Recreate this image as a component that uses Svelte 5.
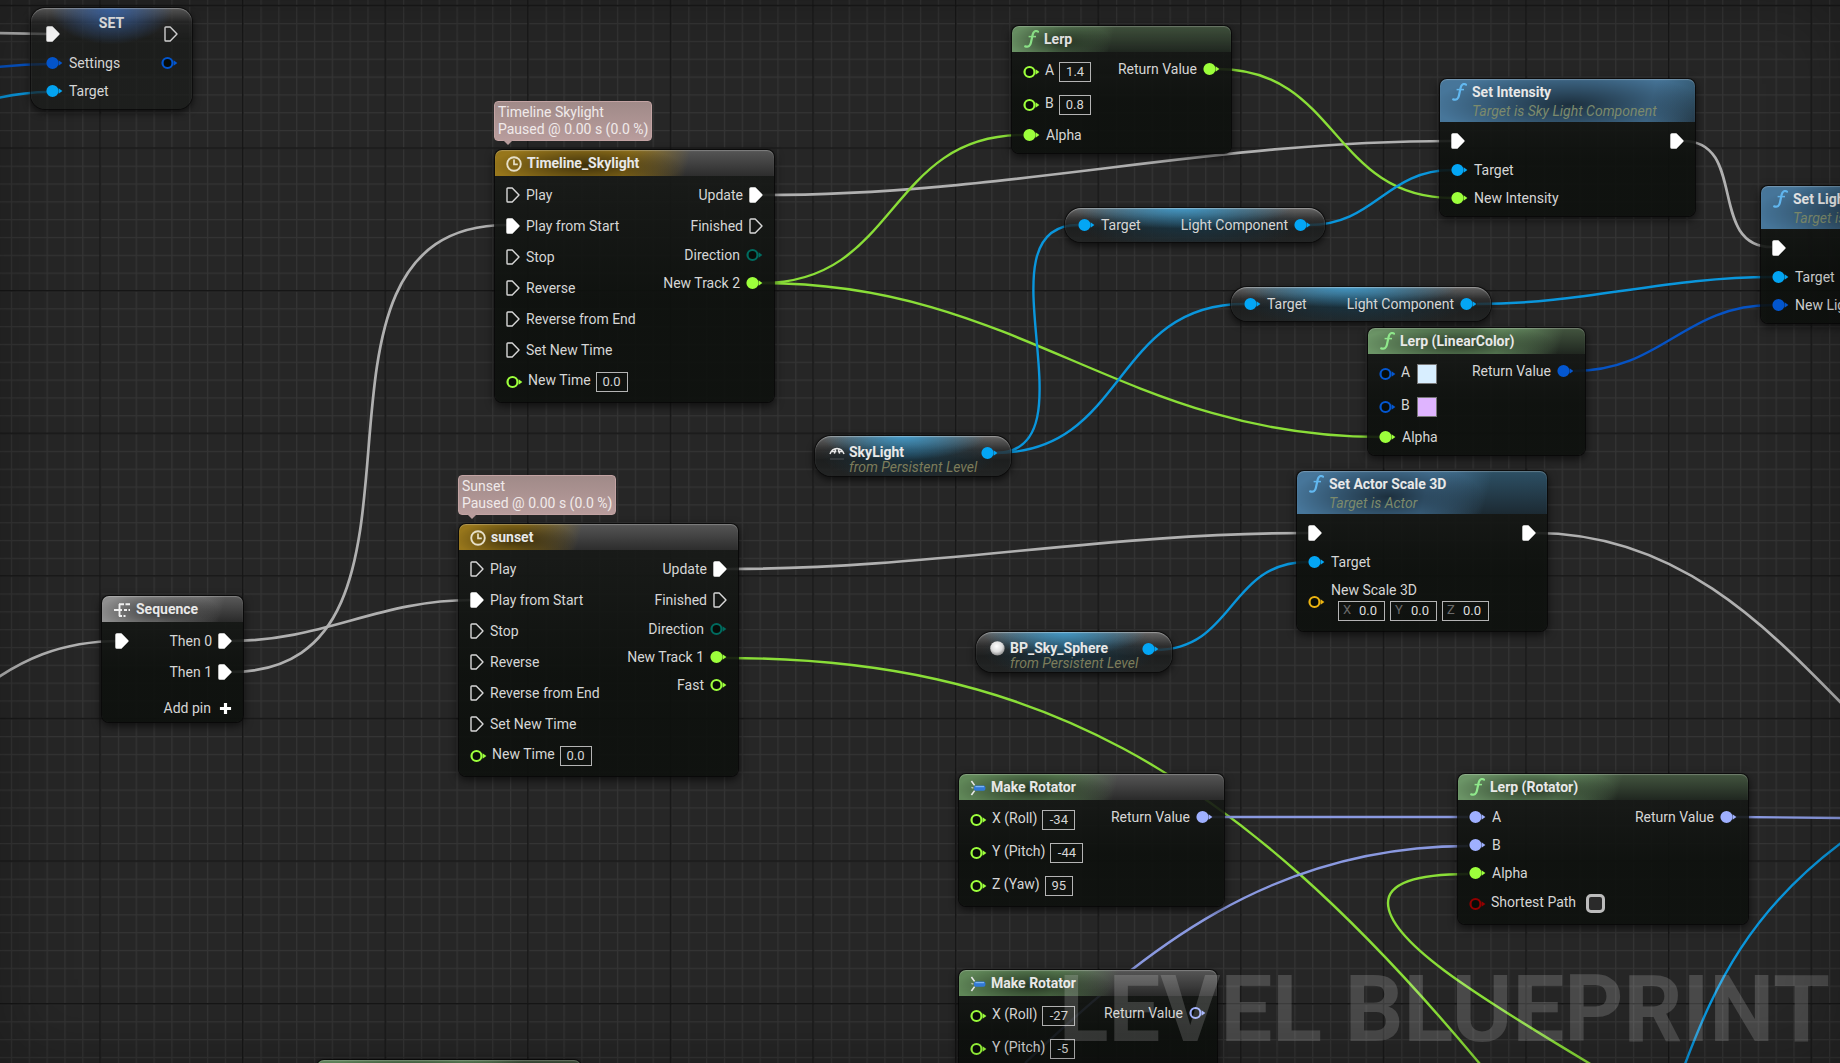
<script>
  const COLORS = {
    exec: '#ffffff',
    float: '#9dff3c',
    object: '#04a6f5',
    struct: '#0457d0',
    rotator: '#9fb0ff',
    vector: '#ecb411',
    bool: '#930000',
    enum: '#006b5f'
  };

  const playPins = [
    { label: 'Play', type: 'exec' },
    { label: 'Play from Start', type: 'exec', linked: true },
    { label: 'Stop', type: 'exec' },
    { label: 'Reverse', type: 'exec' },
    { label: 'Reverse from End', type: 'exec' },
    { label: 'Set New Time', type: 'exec' },
    { label: 'New Time', type: 'float', value: '0.0', size: 32 }
  ];

  const nodes = [
    {
      id: 'skylight-timeline', x: 495, y: 150, w: 279, kind: 'timeline', icon: 'clock', glow: 190,
      title: 'Timeline_Skylight',
      bubble: ['Timeline Skylight', 'Paused @ 0.00 s (0.0 %)'],
      inputs: playPins,
      outputs: [
        { label: 'Update', type: 'exec', linked: true },
        { label: 'Finished', type: 'exec' },
        { label: 'Direction', type: 'enum' },
        { label: 'New Track 2', type: 'float', linked: true }
      ]
    },
    {
      id: 'sunset-timeline', x: 459, y: 524, w: 279, kind: 'timeline', icon: 'clock', glow: 120,
      title: 'sunset',
      bubble: ['Sunset', 'Paused @ 0.00 s (0.0 %)'],
      inputs: playPins,
      outputs: [
        { label: 'Update', type: 'exec', linked: true },
        { label: 'Finished', type: 'exec' },
        { label: 'Direction', type: 'enum' },
        { label: 'New Track 1', type: 'float', linked: true },
        { label: 'Fast', type: 'float' }
      ]
    },
    {
      id: 'sequence', x: 102, y: 596, w: 141, kind: 'flow', icon: 'sequence', glow: 120,
      title: 'Sequence',
      inputs: [{ label: '', type: 'exec', linked: true }],
      outputs: [
        { label: 'Then 0', type: 'exec', linked: true },
        { label: 'Then 1', type: 'exec', linked: true }
      ],
      addPin: true
    },
    {
      id: 'lerp', x: 1012, y: 26, w: 219, kind: 'pure', icon: 'func', glow: 100,
      title: 'Lerp',
      inputs: [
        { label: 'A', type: 'float', value: '1.4', size: 32 },
        { label: 'B', type: 'float', value: '0.8', size: 32 },
        { label: 'Alpha', type: 'float', linked: true }
      ],
      outputs: [{ label: 'Return Value', type: 'float', linked: true }]
    },
    {
      id: 'lerp-color', x: 1368, y: 328, w: 217, kind: 'pure', icon: 'func', glow: 190,
      title: 'Lerp (LinearColor)',
      inputs: [
        { label: 'A', type: 'struct', color: '#d8eeff' },
        { label: 'B', type: 'struct', color: '#dfb4ff' },
        { label: 'Alpha', type: 'float', linked: true }
      ],
      outputs: [{ label: 'Return Value', type: 'struct', linked: true }]
    },
    {
      id: 'lerp-rotator', x: 1458, y: 774, w: 290, kind: 'pure', icon: 'func', glow: 160,
      title: 'Lerp (Rotator)',
      inputs: [
        { label: 'A', type: 'rotator', linked: true },
        { label: 'B', type: 'rotator', linked: true },
        { label: 'Alpha', type: 'float', linked: true },
        { label: 'Shortest Path', type: 'bool', check: true }
      ],
      outputs: [{ label: 'Return Value', type: 'rotator', linked: true }]
    },
    {
      id: 'rotator-1', x: 959, y: 774, w: 265, kind: 'make', icon: 'make', glow: 155,
      title: 'Make Rotator',
      inputs: [
        { label: 'X (Roll)', type: 'float', value: '-34', size: 33 },
        { label: 'Y (Pitch)', type: 'float', value: '-44', size: 33 },
        { label: 'Z (Yaw)', type: 'float', value: '95', size: 28 }
      ],
      outputs: [{ label: 'Return Value', type: 'rotator', linked: true }]
    },
    {
      id: 'rotator-2', x: 959, y: 970, w: 258, kind: 'make', icon: 'make', glow: 155,
      title: 'Make Rotator',
      inputs: [
        { label: 'X (Roll)', type: 'float', value: '-27', size: 33 },
        { label: 'Y (Pitch)', type: 'float', value: '-5', size: 25 }
      ],
      outputs: [{ label: 'Return Value', type: 'rotator' }]
    },
    {
      id: 'set-intensity', x: 1440, y: 79, w: 255, kind: 'call', icon: 'func', glow: 270,
      title: 'Set Intensity', sub: 'Target is Sky Light Component',
      inputs: [
        { label: '', type: 'exec', linked: true },
        { label: 'Target', type: 'object', linked: true },
        { label: 'New Intensity', type: 'float', linked: true }
      ],
      outputs: [{ label: '', type: 'exec', linked: true }]
    },
    {
      id: 'set-light', x: 1761, y: 186, w: 255, kind: 'call', icon: 'func', glow: 270,
      title: 'Set Light Color', sub: 'Target is Light Component',
      inputs: [
        { label: '', type: 'exec', linked: true },
        { label: 'Target', type: 'object', linked: true },
        { label: 'New Light Color', type: 'struct', linked: true }
      ],
      outputs: [{ label: '', type: 'exec', linked: true }]
    },
    {
      id: 'set-scale', x: 1297, y: 471, w: 250, kind: 'call', icon: 'func', glow: 190,
      title: 'Set Actor Scale 3D', sub: 'Target is Actor',
      inputs: [
        { label: '', type: 'exec', linked: true },
        { label: 'Target', type: 'object', linked: true },
        { label: 'New Scale 3D', type: 'vector', axes: ['X', 'Y', 'Z'] }
      ],
      outputs: [{ label: '', type: 'exec', linked: true }]
    }
  ];

  const casts = [
    { x: 1065, y: 208, w: 260 },
    { x: 1231, y: 287, w: 260 }
  ];

  const refs = [
    { x: 815, y: 436, w: 196, icon: 'dome', title: 'SkyLight' },
    { x: 976, y: 632, w: 196, icon: 'sphere', title: 'BP_Sky_Sphere' }
  ];

  // horizontal tangents grow with the distance between both pins
  function spline(x1, y1, x2, y2) {
    const c = (Math.abs(x2 - x1) + Math.abs(y2 - y1)) / 3;
    return `M${x1} ${y1}C${x1 + c} ${y1} ${x2 - c} ${y2} ${x2} ${y2}`;
  }

  const wires = [
    { type: 'exec', d: 'M-10 33L50 34' },
    { type: 'struct', d: 'M-10 68Q20 64 50 64' },
    { type: 'object', d: 'M-10 100Q20 92 50 92' },
    { type: 'exec', d: 'M-20 690C20 660 60 641 120 641' },
    { type: 'exec', d: spline(230, 641, 472, 600) },
    { type: 'exec', d: spline(230, 672, 507, 225) },
    { type: 'exec', d: spline(763, 195, 1452, 141) },
    { type: 'float', d: spline(762, 283, 1023, 135) },
    { type: 'float', d: spline(762, 283, 1381, 437) },
    { type: 'float', d: spline(1218, 69, 1452, 198) },
    { type: 'object', d: spline(1309, 225, 1452, 170) },
    { type: 'object', d: spline(995, 453, 1078, 225) },
    { type: 'object', d: spline(995, 453, 1244, 304) },
    { type: 'object', d: spline(1477, 304, 1772, 277) },
    { type: 'struct', d: spline(1574, 371, 1772, 305) },
    { type: 'exec', d: spline(1683, 141, 1772, 247) },
    { type: 'exec', d: spline(727, 569, 1308, 533) },
    { type: 'object', d: spline(1155, 650, 1308, 562) },
    { type: 'exec', d: 'M1535 533C1680 533 1770 630 1850 712' },
    { type: 'float', d: 'M725 658C1030 658 1230 764 1480 1064' },
    { type: 'rotator', d: 'M1210 817H1468' },
    { type: 'rotator', d: 'M1025 1063C1145 950 1270 846 1468 846' },
    { type: 'float', d: 'M1468 874C1412 874 1388 885 1388 903C1388 940 1470 992 1592 1065' },
    { type: 'rotator', d: 'M1735 817L2400 823' },
    { type: 'object', d: 'M1685 1064C1715 985 1750 910 1845 840' }
  ];
</script>

{#snippet pin(p)}
  {#if p.type === 'exec'}
    <svg class="pin exec" viewBox="0 0 14 16" aria-hidden="true">
      <path d="M1 1.8Q1 1 1.8 1H6.2L13 8L6.2 15H1.8Q1 15 1 14.2Z" class:linked={p.linked} />
    </svg>
  {:else}
    <svg class="pin data" viewBox="0 0 17 14" aria-hidden="true">
      <circle cx="6.5" cy="7" r="5" fill={p.linked ? COLORS[p.type] : '#080c08'} stroke={COLORS[p.type]} stroke-width="2.2" />
      <path d="M12.6 4.2L16.4 7L12.6 9.8Z" fill={COLORS[p.type]} />
    </svg>
  {/if}
{/snippet}

{#snippet icon(name)}
  {#if name === 'clock'}
    <svg class="icon" viewBox="0 0 16 16" aria-hidden="true">
      <circle cx="8" cy="8" r="6.8" fill="none" stroke="#e6dfc8" stroke-width="1.9" />
      <path d="M8 3.6V8.4H11.8" fill="none" stroke="#e6dfc8" stroke-width="1.7" />
    </svg>
  {:else if name === 'func'}
    <svg class="icon func" viewBox="0 0 16 18" aria-hidden="true">
      <path d="M15 1.6C12.5 .2 10.4 1.4 9.7 4.6L7.9 12.8C7.2 16 5.4 17.4 2.2 16.4" fill="none" stroke-width="2.2" stroke-linecap="round" />
      <path d="M5.6 6.6H13" fill="none" stroke-width="1.5" />
    </svg>
  {:else if name === 'make'}
    <svg class="icon" viewBox="0 0 16 16" aria-hidden="true">
      <path d="M1.4 1L4.6 5.4M1.4 15L4.6 10.6" stroke="#e8e8e8" stroke-width="1.6" />
      <path d="M1.4 7.4L3.4 8.2" stroke="#b8c4b8" stroke-width="1.4" />
      <rect x="4" y="5.6" width="11.4" height="5.2" rx="1.8" fill="#3179d6" />
      <path d="M5.4 6.6H14" stroke="#7db4f3" stroke-width="1.2" />
    </svg>
  {:else if name === 'sequence'}
    <svg class="icon wide" viewBox="0 0 18 16" aria-hidden="true">
      <path d="M1 8H9M11 8H14M15.5 8H17M6.5 2V14.2M6 2.2H11M12.5 2.2H17M6 14H9M10.5 14H12.5" fill="none" stroke="#efefef" stroke-width="1.9" />
    </svg>
  {:else if name === 'dome'}
    <svg class="icon" viewBox="0 0 16 16" aria-hidden="true">
      <path d="M1 9C2.4 5 4.4 3.4 8 3.4S13.6 5 15 9M5.4 8.6L6.8 3.8M10.6 8.6L9.2 3.8M2.8 6.6H7.4M8.8 6.6H13.2" fill="none" stroke="#e8e8e8" stroke-width="1.5" />
      <path d="M1 14H15" stroke="#4b4f52" />
    </svg>
  {:else if name === 'sphere'}
    <svg class="icon" viewBox="0 0 16 16" aria-hidden="true">
      <defs>
        <radialGradient id="ball" cx=".45" cy=".35" r=".65">
          <stop offset="0" stop-color="#fff" />
          <stop offset=".6" stop-color="#dcdcdc" />
          <stop offset="1" stop-color="#8a8a8a" />
        </radialGradient>
      </defs>
      <circle cx="7.4" cy="7.4" r="7.2" fill="url(#ball)" />
    </svg>
  {/if}
{/snippet}

<main class="graph">
  <svg class="layer" aria-hidden="true">
    <defs>
      <pattern id="minor" x="100" y="5.2" width="17.825" height="17.825" patternUnits="userSpaceOnUse">
        <path d="M0 .6H17.825M.6 0V17.825" stroke="#343434" stroke-width="1.3" />
      </pattern>
      <pattern id="major" x="99.4" y="4.8" width="142.6" height="142.6" patternUnits="userSpaceOnUse">
        <path d="M0 .8H142.6M.8 0V142.6" stroke="#161616" stroke-width="1.5" />
      </pattern>
    </defs>
    <rect width="100%" height="100%" fill="url(#minor)" />
    <rect width="100%" height="100%" fill="url(#major)" />
    {#each wires as w}
      <path class="wire {w.type}" d={w.d} />
    {/each}
  </svg>

  <article class="node var" style="left: 31px; top: 8px; width: 161px">
    <h2>SET</h2>
    <div class="pins">
      <ul>
        <li class="row exec">{@render pin({ type: 'exec', linked: true })}</li>
        <li class="row">{@render pin({ type: 'struct', linked: true })}<span>Settings</span></li>
        <li class="row">{@render pin({ type: 'object', linked: true })}<span>Target</span></li>
      </ul>
      <ul class="out">
        <li class="row exec">{@render pin({ type: 'exec' })}</li>
        <li class="row">{@render pin({ type: 'struct' })}</li>
      </ul>
    </div>
  </article>

  {#each nodes as n (n.id)}
    <article class="node {n.kind}" style="left: {n.x}px; top: {n.y}px; width: {n.w}px; --glow: {n.glow}px">
      {#if n.bubble}
        <div class="bubble">
          {#each n.bubble as line}<p>{line}</p>{/each}
        </div>
      {/if}
      <header class:tall={n.sub}>
        {@render icon(n.icon)}
        <div>
          <h2>{n.title}</h2>
          {#if n.sub}<p>{n.sub}</p>{/if}
        </div>
      </header>
      <div class="pins">
        <ul>
          {#each n.inputs as p}
            {@const id = `${n.id}-${p.label.replace(/\W+/g, '')}`}
            {#if p.axes}
              <li class="row vector">
                {@render pin(p)}
                <div>
                  <span>{p.label}</span>
                  <div class="axes">
                    {#each p.axes as axis}
                      <label>{axis}<input type="text" value="0.0" /></label>
                    {/each}
                  </div>
                </div>
              </li>
            {:else if p.value !== undefined}
              <li class="row field">
                {@render pin(p)}
                <label for={id}>{p.label}</label>
                <input {id} class="value" type="text" value={p.value} style="width: {p.size}px" />
              </li>
            {:else if p.color}
              <li class="row field">
                {@render pin(p)}
                <span class="name">{p.label}</span>
                <button class="swatch" aria-label="{p.label} color" style="background: {p.color}"></button>
              </li>
            {:else if p.check}
              <li class="row field">
                {@render pin(p)}
                <label for={id}>{p.label}</label>
                <input {id} type="checkbox" />
              </li>
            {:else}
              <li class="row" class:exec={p.type === 'exec'}>
                {@render pin(p)}
                {#if p.label}<span>{p.label}</span>{/if}
              </li>
            {/if}
          {/each}
        </ul>
        <ul class="out">
          {#each n.outputs as p}
            <li class="row" class:exec={p.type === 'exec'}>
              {#if p.label}<span>{p.label}</span>{/if}
              {@render pin(p)}
            </li>
          {/each}
          {#if n.addPin}
            <li>
              <button class="add">
                Add pin
                <svg viewBox="0 0 14 14" aria-hidden="true"><path d="M7 1V13M1 7H13" stroke="#fff" stroke-width="3.4" /></svg>
              </button>
            </li>
          {/if}
        </ul>
      </div>
    </article>
  {/each}

  <article class="node pure" style="left: 317px; top: 1060px; width: 264px; --glow: 200px">
    <header></header>
  </article>

  {#each casts as c}
    <article class="pill cast" style="left: {c.x}px; top: {c.y}px; width: {c.w}px">
      <div class="row">{@render pin({ type: 'object', linked: true })}<span>Target</span></div>
      <div class="row"><span>Light Component</span>{@render pin({ type: 'object', linked: true })}</div>
    </article>
  {/each}

  {#each refs as r}
    <article class="pill ref" style="left: {r.x}px; top: {r.y}px; width: {r.w}px">
      {@render icon(r.icon)}
      <div class="text">
        <h2>{r.title}</h2>
        <p>from Persistent Level</p>
      </div>
      {@render pin({ type: 'object', linked: true })}
    </article>
  {/each}

  <div class="watermark">LEVEL BLUEPRINT</div>
  <div class="vignette"></div>
</main>

<style>
  :global(body) {
    background: #262626;
  }

  .graph {
    position: relative;
    height: 100vh;
    overflow: hidden;
    background: #262626;
    color: #d6d6d6;
    font: 14px/16px Roboto, "Liberation Sans", sans-serif;
  }

  .layer {
    position: absolute;
    inset: 0;
    width: 100%;
    height: 100%;
  }

  .wire {
    fill: none;
    stroke-width: 2.4;
  }
  .wire.exec { stroke: #b0b0b0; stroke-width: 2.7; }
  .wire.float { stroke: #8ade38; }
  .wire.object { stroke: #0a96dc; }
  .wire.struct { stroke: #0653c4; }
  .wire.rotator { stroke: #8a99e0; }

  h2, p, ul {
    margin: 0;
    padding: 0;
  }
  ul {
    list-style: none;
  }
  h2 {
    color: #e8e8e8;
    font-size: 14px;
    font-weight: 700;
    line-height: 19px;
    white-space: nowrap;
  }
  input, button {
    box-sizing: border-box;
    margin: 0;
    font: inherit;
    color: inherit;
  }

  .node {
    position: absolute;
    border-radius: 7px;
    background: linear-gradient(rgba(25, 27, 25, 0.9), rgba(13, 16, 13, 0.9) 60%);
    box-shadow: 0 0 0 1px rgba(5, 5, 5, 0.75), 0 3px 8px 1px rgba(0, 0, 0, 0.6);
  }

  header {
    display: flex;
    gap: 5px;
    box-sizing: border-box;
    height: 26px;
    padding: 4px 11px 0;
    border-radius: 7px 7px 0 0;
    box-shadow: inset 0 1px 1px rgba(255, 255, 255, 0.25);
    background:
      radial-gradient(ellipse calc(var(--glow) * 0.5) 80% at calc(var(--glow) * 0.48) 60%, rgba(0, 0, 0, 0.6), transparent),
      linear-gradient(105deg, var(--tint) calc(var(--glow) - 60px), transparent var(--glow)),
      linear-gradient(var(--rest), var(--rest-end));
  }
  header.tall {
    height: 43px;
  }
  header p {
    color: #7c8a6c;
    font-size: 14px;
    font-style: italic;
    line-height: 18px;
    white-space: nowrap;
  }
  .timeline { --tint: #97761b; --rest: #565656; --rest-end: #2d2d2d; }
  .flow { --tint: #8f8f8f; --rest: #5a5a5a; --rest-end: #2a2a2a; }
  .pure { --tint: #6b9466; --rest: #43553f; --rest-end: #202720; }
  .make { --tint: #608758; --rest: #565656; --rest-end: #2a2a2a; }
  .call { --tint: #47769a; --rest: #2d5065; --rest-end: #1c2a33; }

  .icon {
    flex: none;
    width: 16px;
    height: 16px;
    margin-top: 2px;
  }
  .icon.wide {
    width: 18px;
  }
  .icon.func {
    height: 18px;
    margin-top: 0;
  }
  .pure .func { stroke: #8fe88b; }
  .call .func { stroke: #62b8f0; }

  .pins {
    display: flex;
    justify-content: space-between;
    padding: 3px 11px 4px;
  }
  .flow .pins {
    padding-left: 13px;
  }
  .row {
    display: flex;
    align-items: center;
    gap: 6px;
    height: 28px;
    white-space: nowrap;
  }
  .row.exec {
    height: 31px;
  }
  .row.field {
    gap: 5px;
    height: 33px;
  }
  .row.vector {
    height: 51px;
  }
  .out .row {
    justify-content: flex-end;
  }
  .field label, .field .name {
    margin-bottom: 4px;
  }

  .pin {
    flex: none;
    display: block;
  }
  .pin.exec {
    width: 14px;
    height: 16px;
  }
  .pin.exec path {
    fill: none;
    stroke: #d8d8d8;
    stroke-width: 1.4;
    stroke-linejoin: round;
  }
  .pin.exec path.linked {
    fill: #fff;
    stroke: #fff;
  }
  .pin.data {
    width: 17px;
    height: 14px;
  }

  .value {
    height: 20px;
    padding: 0 0 1px;
    border: 1px solid #b4b4b4;
    background: none;
    font-size: 13px;
    text-align: center;
  }
  .swatch {
    width: 20px;
    height: 20px;
    margin-left: 2px;
    padding: 0;
    border: 1px solid #777;
  }
  input[type='checkbox'] {
    appearance: none;
    width: 19px;
    height: 19px;
    margin-left: 5px;
    border: 3px solid #bcbcbc;
    border-radius: 5px;
    background: #2a2a2a;
  }
  .axes {
    display: flex;
    gap: 5px;
    margin: 3px 0 0 7px;
  }
  .axes label {
    display: flex;
    justify-content: space-between;
    box-sizing: border-box;
    width: 47px;
    height: 20px;
    padding: 0 5px 0 4px;
    border: 1px solid #b4b4b4;
    color: #6a6a6a;
    font-size: 13px;
  }
  .axes input {
    width: 20px;
    height: 17px;
    padding: 0;
    border: 0;
    background: none;
    color: #dedede;
  }
  .add {
    display: flex;
    align-items: center;
    gap: 8px;
    height: 22px;
    margin-top: 10px;
    padding: 0;
    border: 0;
    background: none;
  }
  .flow .pins {
    padding-bottom: 3px;
  }
  .add svg {
    width: 13px;
    height: 13px;
  }

  .bubble {
    position: absolute;
    left: -1px;
    bottom: calc(100% + 9px);
    box-sizing: border-box;
    width: 158px;
    padding: 2px 3px;
    border: 1px solid #c3a3a3;
    border-radius: 4px;
    background: linear-gradient(#a08a88, #b89c9c);
    color: #f0eaea;
    font-size: 14px;
    line-height: 17px;
    white-space: nowrap;
  }
  .bubble::after {
    content: '';
    position: absolute;
    left: 8px;
    top: 100%;
    border: 5px solid transparent;
    border-top-color: #b89c9c;
  }

  .pill, .var {
    border-radius: 16px;
    background:
      radial-gradient(ellipse 42% 60% at 45% 0, rgba(62, 165, 220, 0.8), transparent),
      radial-gradient(ellipse 45% 75% at 48% 45%, rgba(20, 75, 105, 0.5), transparent),
      linear-gradient(rgba(110, 110, 110, 0.9), rgba(48, 48, 48, 0.8) 35%, rgba(28, 30, 30, 0.85) 60%, rgba(34, 36, 36, 0.85));
    box-shadow: inset 0 1px 1px rgba(255, 255, 255, 0.35), 0 0 0 1px rgba(8, 8, 8, 0.7), 0 3px 7px 1px rgba(0, 0, 0, 0.6);
  }
  .pill {
    position: absolute;
    display: flex;
    box-sizing: border-box;
  }
  .cast {
    align-items: center;
    justify-content: space-between;
    height: 34px;
    padding: 0 14px 0 13px;
  }
  .ref {
    height: 40px;
    gap: 4px;
    padding: 7px 15px 0 14px;
  }
  .ref .text {
    flex: 1;
  }
  .ref p {
    color: #7c7c5a;
    font-size: 14px;
    font-style: italic;
    line-height: 10px;
    white-space: nowrap;
  }
  .ref .pin {
    margin-top: 3px;
  }

  .var {
    display: grid;
    border-radius: 14px;
    background:
      radial-gradient(ellipse 38% 36% at 50% 0, rgba(58, 110, 190, 0.85), transparent),
      linear-gradient(rgba(110, 110, 110, 0.8), rgba(40, 40, 40, 0.6) 14%, rgba(26, 28, 26, 0.7) 32%);
  }
  .var h2, .var .pins {
    grid-area: 1 / 1;
  }
  .var h2 {
    padding-top: 6px;
    text-align: center;
  }
  .var .pins {
    padding: 10px 14px 4px 15px;
  }

  .watermark {
    position: absolute;
    right: 10px;
    bottom: 7px;
    color: rgba(255, 255, 255, 0.17);
    font-size: 92px;
    font-weight: 700;
    line-height: 92px;
    white-space: nowrap;
    pointer-events: none;
  }
  .vignette {
    position: absolute;
    inset: 0;
    box-shadow: inset 0 0 70px rgba(0, 0, 0, 0.28);
    pointer-events: none;
  }
</style>
